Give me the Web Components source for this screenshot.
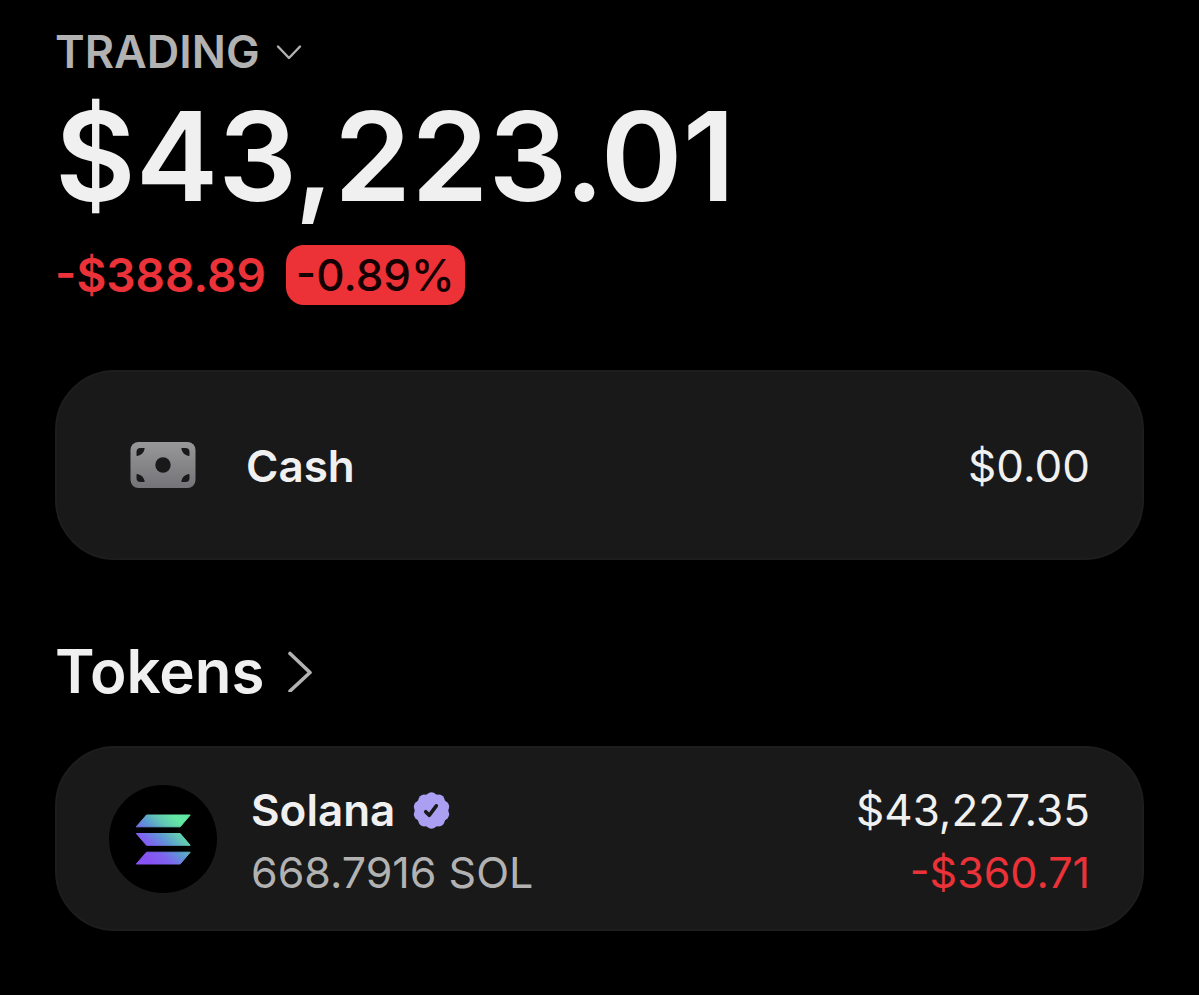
<!DOCTYPE html>
<html lang="en">
<head>
<meta charset="utf-8">
<meta name="viewport" content="width=device-width, initial-scale=1">
<title>Trading</title>
<style>
    body {
        margin: 0;
        background: #000;
        color: #f0f0f0;
        font-family: Inter, "Liberation Sans", sans-serif;
    }
</style>
</head>
<body>
<wallet-page>
    <account-balance slot="balance" change="-$388.89" percent="-0.89%">
        <span slot="account">TRADING</span>
        $43,223.01
    </account-balance>
    <asset-card class="cash">
        <cash-icon slot="icon"></cash-icon>
        <span slot="name">Cash</span>
        <span slot="value">$0.00</span>
    </asset-card>
    <section-title href="#tokens">Tokens</section-title>
    <asset-card class="token" amount="668.7916 SOL" change="-$360.71">
        <solana-icon slot="icon"></solana-icon>
        <span slot="name">Solana</span>
        <verified-badge slot="name"></verified-badge>
        <span slot="value">$43,227.35</span>
    </asset-card>
</wallet-page>

<script>
function define(name, html, setup) {
    const template = document.createElement("template");
    template.innerHTML = html;
    customElements.define(name, class extends HTMLElement {
        constructor() {
            super();
            this.attachShadow({ mode: "open" });
        }

        connectedCallback() {
            this.shadowRoot.replaceChildren(template.content.cloneNode(true));
            if (setup) setup(this, this.shadowRoot);
        }
    });
}

define("wallet-page", `
    <style>
    :host {
        display: block;
    }
    main {
        display: flex;
        flex-direction: column;
        padding: 24px 55px 64px;
    }
    ::slotted(.cash) {
        --card-padding: 39px;
        --icon-gap: 29px;
        --text-top: 2px;
        margin-top: 65px;
    }
    ::slotted(section-title) {
        margin-top: 74px;
    }
    ::slotted(.token) {
        --card-padding: 26px;
        --icon-gap: 34px;
        --text-top: 5px;
        margin-top: 38px;
    }
    </style>
    <main>
        <slot name="balance"></slot>
        <slot></slot>
    </main>
`);

define("account-balance", `
    <style>
    :host {
        display: flex;
        flex-direction: column;
        align-items: flex-start;
    }
    button {
        display: flex;
        align-items: center;
        gap: 16px;
        padding: 0;
        border: 0;
        background: none;
        color: #b2b2b2;
        font: 600 45px/56px Inter, "Liberation Sans", sans-serif;
        cursor: pointer;
    }
    h1 {
        margin: 12px 0 25px;
        font-size: 124px;
        line-height: 128px;
        font-weight: 600;
    }
    .change {
        display: flex;
        align-items: center;
        gap: 20px;
        color: #ea3238;
        font-size: 44px;
        line-height: 60px;
        font-weight: 500;
    }
    .amount {
        font-size: 46px;
        font-weight: 600;
    }
    .percent {
        padding: 0 10px;
        border-radius: 18px;
        background: #ed3237;
        color: #140000;
    }
    </style>
    <button type="button" aria-haspopup="menu">
        <slot name="account"></slot>
        <svg width="26" height="16" viewBox="0 0 26 16" fill="none" stroke="currentColor" stroke-width="2.4" stroke-linecap="round" stroke-linejoin="round" aria-hidden="true">
            <path d="M2 2.5 13 14 24 2.5"/>
        </svg>
    </button>
    <h1><slot></slot></h1>
    <div class="change">
        <span class="amount"></span>
        <span class="percent"></span>
    </div>
`, (host, root) => {
    root.querySelector(".amount").textContent = host.getAttribute("change");
    root.querySelector(".percent").textContent = host.getAttribute("percent");
});

define("section-title", `
    <style>
    :host {
        display: block;
    }
    h2 {
        margin: 0;
        font-size: 60px;
        line-height: 74px;
        font-weight: 600;
    }
    a {
        display: inline-flex;
        align-items: center;
        gap: 23px;
        color: inherit;
        text-decoration: none;
    }
    svg {
        color: #b2b2b2;
    }
    </style>
    <h2>
        <a>
            <slot></slot>
            <svg width="26" height="42" viewBox="0 0 26 42" fill="none" stroke="currentColor" stroke-width="3.6" stroke-linecap="round" stroke-linejoin="round" aria-hidden="true">
                <path d="M3 3.5 23 22.5 3 41"/>
            </svg>
        </a>
    </h2>
`, (host, root) => {
    root.querySelector("a").href = host.getAttribute("href");
});

define("asset-card", `
    <style>
    :host {
        display: flex;
        align-items: center;
        gap: var(--icon-gap);
        box-sizing: border-box;
        padding: var(--card-padding) 52px;
        border: 2px solid #1d1d1d;
        border-radius: 60px;
        background: #191919;
        font-size: 44px;
        line-height: 62px;
    }
    .icon {
        display: flex;
        align-items: center;
        justify-content: center;
        flex: none;
        width: 108px;
        height: 108px;
    }
    .text, .numbers {
        padding-top: var(--text-top);
    }
    .text {
        flex: 1;
    }
    .name {
        display: flex;
        align-items: center;
        gap: 18px;
        font-weight: 600;
    }
    .numbers {
        text-align: right;
    }
    .amount, .change {
        font-size: 43px;
    }
    .amount {
        color: #b2b2b2;
    }
    .change {
        color: #ea3238;
    }
    .amount:empty, .change:empty {
        display: none;
    }
    </style>
    <div class="icon"><slot name="icon"></slot></div>
    <div class="text">
        <div class="name"><slot name="name"></slot></div>
        <div class="amount"></div>
    </div>
    <div class="numbers">
        <div><slot name="value"></slot></div>
        <div class="change"></div>
    </div>
`, (host, root) => {
    root.querySelector(".amount").textContent = host.getAttribute("amount") || "";
    root.querySelector(".change").textContent = host.getAttribute("change") || "";
});

define("cash-icon", `
    <style>
    :host, svg {
        display: block;
    }
    </style>
    <svg width="66" height="48" viewBox="0 0 66 48" aria-hidden="true">
        <defs>
            <linearGradient id="note" x1="0" y1="0" x2="0" y2="1">
                <stop offset="0" stop-color="#98989a"/>
                <stop offset="1" stop-color="#747478"/>
            </linearGradient>
        </defs>
        <rect x=".5" y="1" width="65" height="46" rx="8" fill="url(#note)"/>
        <g fill="#191919">
            <circle cx="33" cy="24" r="7.7"/>
            <path id="corner" d="M10.500 7H14q.8 0 .7.800C13.900 11.500 11.500 14.200 7.400 15q-.9.100-.9-.8V11q0-4 4-4z"/>
            <use href="#corner" transform="matrix(-1 0 0 1 66 0)"/>
            <use href="#corner" transform="matrix(1 0 0 -1 0 48)"/>
            <use href="#corner" transform="matrix(-1 0 0 -1 66 48)"/>
        </g>
    </svg>
`);

define("solana-icon", `
    <style>
    :host, svg {
        display: block;
    }
    </style>
    <svg width="108" height="108" viewBox="0 0 108 108" aria-hidden="true">
        <defs>
            <linearGradient id="sol" gradientUnits="userSpaceOnUse" x1="34" y1="76" x2="76" y2="32">
                <stop offset=".08" stop-color="#8752f3"/>
                <stop offset=".3" stop-color="#7d66ef"/>
                <stop offset=".5" stop-color="#5d98d4"/>
                <stop offset=".68" stop-color="#62c6b4"/>
                <stop offset=".88" stop-color="#62e8a4"/>
            </linearGradient>
        </defs>
        <circle cx="54" cy="54" r="54" fill="#000"/>
        <g fill="url(#sol)" stroke="url(#sol)" stroke-linejoin="round">
            <path d="M37.500 30H81.200L71.200 41.800H27.300z"/>
            <path d="M27.300 48.500H71.200L81.200 60.300H37.500z"/>
            <path d="M37.500 67.200H81.200L71.200 79H27.300z"/>
        </g>
    </svg>
`);

define("verified-badge", `
    <style>
    :host, svg {
        display: block;
    }
    </style>
    <svg width="37" height="37" viewBox="-18.500 -18.500 37 37" role="img" aria-label="Verified">
        <g class="seal" fill="#ab9ff2">
            <circle r="16.800"/>
        </g>
        <path d="M-5.800 1.200-2.300 4.800 4.800-4.700" fill="none" stroke="#191919" stroke-width="3.600" stroke-linecap="round" stroke-linejoin="round"/>
    </svg>
`, (host, root) => {
    // ten soft lobes round the rim
    const seal = root.querySelector(".seal");
    const lobe = seal.querySelector("circle");
    for (let i = 0; i < 10; i++) {
        const c = lobe.cloneNode();
        const angle = (i / 10) * Math.PI * 2 - Math.PI / 2;
        c.setAttribute("cx", 12.5 * Math.cos(angle));
        c.setAttribute("cy", 12.5 * Math.sin(angle));
        c.setAttribute("r", 5.8);
        seal.appendChild(c);
    }
});
</script>
</body>
</html>
